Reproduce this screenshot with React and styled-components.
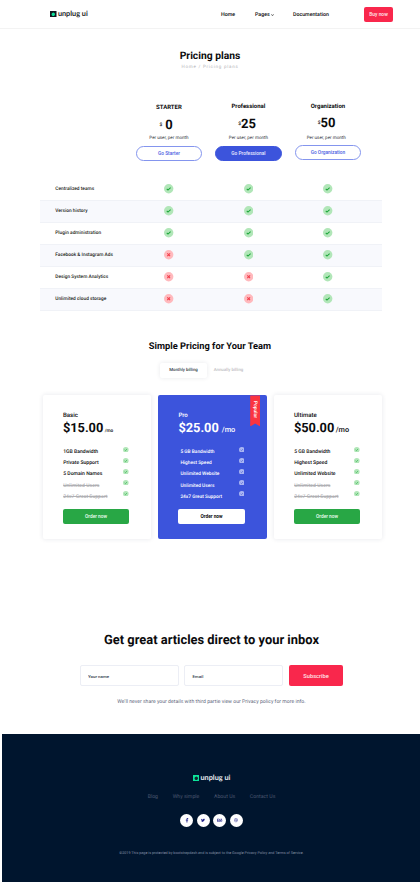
import React from 'react';
import styled, { createGlobalStyle, css } from 'styled-components';
import { FaFacebookF, FaTwitter, FaBehance, FaDribbble } from 'react-icons/fa';

const GlobalStyle = createGlobalStyle`
  *, *::before, *::after { box-sizing: border-box; }
  body { margin: 0; background: #fff; color: #0b0b0d; font-family: Roboto, sans-serif; font-weight: 500; overflow: hidden; }
  button, input { font: inherit; border: 0; padding: 0; margin: 0; }
  ul { list-style: none; margin: 0; padding: 0; }
  h1, h2, h3, p { margin: 0; }
`;

const Page = styled.div`
  width: 420px;
  height: 882px;
  display: flex;
  flex-direction: column;
  white-space: nowrap;
  text-rendering: geometricPrecision;
`;

/* Header */
const Header = styled.header`
  height: 29px;
  flex: none;
  display: flex;
  align-items: flex-start;
  padding: 7px 27px 0 50px;
  border-bottom: 1px solid #f3f3f3;
`;
const Brand = styled.div`
  display: flex;
  align-items: center;
  gap: 1.4px;
  height: 14px;
  color: ${(p) => (p.$dark ? '#e9edf2' : '#1c1d1f')};
  font: 700 7.3px/14px Lato, sans-serif;
  svg { width: 6.5px; height: 6.5px; display: block; }
`;
const Nav = styled.nav`
  display: grid;
  grid-template-columns: 34px 38px 71px;
  margin-left: auto;
  font-size: 5.25px;
  line-height: 16px;
`;
const NavLink = styled.a`
  display: flex;
  align-items: center;
  gap: 1.1px;
  svg { width: 3px; height: 3px; }
`;
const BuyButton = styled.button`
  width: 29px;
  height: 14.6px;
  border-radius: 2px;
  background: #f9274c;
  color: #ffe9ed;
  font-size: 4.9px;
  font-weight: 500;
`;

/* Page title */
const TitleBlock = styled.section`
  height: 71px;
  flex: none;
  padding-top: 20px;
  text-align: center;
`;
const PageTitle = styled.h1`
  font-size: 10.3px;
  line-height: 13px;
  font-weight: 700;
`;
const Breadcrumb = styled.p`
  color: #b4b4b8;
  font-size: 4.5px;
  line-height: 11px;
  font-weight: 400;
  letter-spacing: 0.75px;
`;

/* Comparison */
const PlanHeads = styled.div`
  display: grid;
  grid-template-columns: 66.5px 66.5px 66.5px;
  column-gap: 13px;
  margin-left: 135.7px;
  height: 78.5px;
  flex: none;
  text-align: center;
`;
const PlanHead = styled.div`
  padding-top: ${(p) => p.$top + 1}px;
  display: flex;
  flex-direction: column;
  align-items: center;
`;
const PlanName = styled.h3`
  font-size: 6px;
  line-height: 8px;
  font-weight: 700;
`;
const PlanPrice = styled.div`
  display: flex;
  align-items: center;
  gap: ${(p) => p.$gap}px;
  height: 15px;
  margin: 5.5px ${(p) => p.$gap + 2.7}px 0 0;
  font-size: 13px;
  font-weight: 700;
  span { font-size: 4.8px; font-weight: 500; }
`;
const PlanNote = styled.p`
  margin-top: ${(p) => p.$top - 0.5}px;
  padding-right: ${(p) => p.$nudge || 0}px;
  font-size: 4.55px;
  line-height: 7px;
  font-weight: 400;
  color: #33353d;
`;
const PlanButton = styled.button`
  width: 66.5px;
  height: 15px;
  margin-top: ${(p) => p.$top - 1}px;
  flex: none;
  border-radius: 8px;
  border: 1px solid ${(p) => (p.$filled ? '#3c54dc' : '#8495ee')};
  background: ${(p) => (p.$filled ? '#3c54dc' : '#fff')};
  color: ${(p) => (p.$filled ? '#e8ebff' : '#4b62e2')};
  font-size: 4.8px;
  font-weight: 500;
`;
const Features = styled.div`
  width: 342px;
  margin-left: 40px;
  flex: none;
`;
const FeatureRow = styled.div`
  display: grid;
  grid-template-columns: 74px 79.5px 79.5px 79.5px;
  align-items: center;
  justify-items: center;
  height: 22px;
  padding: 0.2px 0 0 15.3px;
  background: ${(p) => (p.$shaded ? '#f8f9fd' : '#fff')};
  border-bottom: 1px solid #f0f2f7;
`;
const FeatureName = styled.span`
  justify-self: start;
  padding-top: 1px;
  font-size: 4.8px;
  color: #1d1e22;
`;
const Mark = styled.svg`
  width: ${(p) => p.$size}px;
  height: ${(p) => p.$size}px;
  display: block;
`;

/* Pricing cards */
const SectionTitle = styled.h2`
  margin-top: 29.5px;
  height: 13px;
  flex: none;
  text-align: center;
  font-size: 9.3px;
  line-height: 14px;
  font-weight: 700;
`;
const Billing = styled.div`
  display: flex;
  flex: none;
  height: 14.5px;
  margin: 10px 0 0 160px;
  font-size: 4.35px;
  line-height: 16.6px;
`;
const BillingTab = styled.div`
  width: ${(p) => (p.$active ? 47 : 43)}px;
  text-align: center;
  border-radius: 2px;
  color: ${(p) => (p.$active ? '#2d3947' : '#bdbdc2')};
  ${(p) => p.$active && css`box-shadow: 0 0 4px rgba(30, 40, 70, 0.1);`}
`;
const Cards = styled.div`
  display: grid;
  grid-template-columns: 108.5px 108.5px 108.5px;
  column-gap: 7px;
  margin: 17.9px 0 0 42.7px;
  flex: none;
`;
const Card = styled.article`
  position: relative;
  height: 143.6px;
  padding: 15.3px 0 0 20.2px;
  border-radius: 2px;
  background: ${(p) => (p.$featured ? '#3c54dc' : '#fff')};
  color: ${(p) => (p.$featured ? '#fff' : '#0b0b0d')};
  box-shadow: ${(p) => (p.$featured ? 'none' : '0 0 5px rgba(30, 40, 70, 0.11)')};
`;
const CardName = styled.h3`
  font-size: 6.1px;
  line-height: 9px;
  font-weight: 500;
`;
const CardPrice = styled.div`
  display: flex;
  align-items: baseline;
  gap: ${(p) => p.$gap}px;
  height: 16px;
  font-size: 12.8px;
  line-height: 18.6px;
  font-weight: 700;
  small { font-size: ${(p) => p.$unit}px; font-weight: 500; }
`;
const CardBody = styled.div`
  display: flex;
  justify-content: space-between;
  width: 65.9px;
  margin-top: 10.9px;
  padding-left: ${(p) => p.$inset}px;
  height: 60px;
`;
const CardList = styled.ul`
  font-size: ${(p) => p.$size}px;
  line-height: 11.4px;
`;
const CardItem = styled.li`
  ${(p) => p.$off && css`color: #b0b0b4; text-decoration: line-through;`}
`;
const CardMarks = styled.div`
  display: flex;
  flex-direction: column;
  gap: 5.4px;
  padding-top: 0.3px;
`;
const OrderButton = styled.button`
  display: block;
  width: 66.3px;
  height: 14.7px;
  margin-top: 2.6px;
  border-radius: 2px;
  background: ${(p) => (p.$light ? '#fff' : '#28a745')};
  color: ${(p) => (p.$light ? '#0b0b0d' : '#effff2')};
  font-size: 4.8px;
  font-weight: ${(p) => (p.$light ? 700 : 500)};
`;
const Ribbon = styled.div`
  position: absolute;
  top: 0;
  right: 6.5px;
  width: 10px;
  height: 31px;
  padding-bottom: 3px;
  background: #fb3440;
  color: #fff;
  clip-path: polygon(0 0, 100% 0, 100% 100%, 50% 91%, 0 100%);
  writing-mode: vertical-rl;
  text-align: center;
  font-size: 4.9px;
  line-height: 10px;
`;

/* Newsletter */
const Newsletter = styled.section`
  flex: none;
  height: 194.6px;
  padding-top: 93.4px;
`;
const NewsTitle = styled.h2`
  padding-left: 3px;
  text-align: center;
  font-size: 12.9px;
  line-height: 18px;
  font-weight: 700;
`;
const NewsForm = styled.form`
  display: grid;
  grid-template-columns: 99px 99px 54.5px;
  gap: 5.4px;
  height: 21px;
  margin: 14.9px 0 0 80px;
`;
const Field = styled.input`
  width: 100%;
  height: 21px;
  padding: 0.5px 0 0 7px;
  border: 1px solid #eceef5;
  border-radius: 2px;
  font-size: 4.4px;
  background: #fff;
  &::placeholder { color: #2d3947; opacity: 1; }
`;
const Subscribe = styled.button`
  border-radius: 2px;
  background: #f9274c;
  color: #ffe4e9;
  font-size: 5.7px;
  font-weight: 500;
`;
const NewsNote = styled.p`
  margin-top: 11.6px;
  padding-left: 3px;
  text-align: center;
  color: #62687d;
  font-size: 5.15px;
  line-height: 8px;
  font-weight: 400;
`;

/* Footer */
const Footer = styled.footer`
  flex: 1;
  margin-left: 2px;
  padding: 37.2px 0 0 1px;
  background: #00152e;
  display: flex;
  flex-direction: column;
  align-items: center;
`;
const FooterLinks = styled.nav`
  display: flex;
  gap: 14.7px;
  margin-top: 8px;
  font-size: 5.2px;
  line-height: 9px;
  font-weight: 400;
  color: #4c576f;
`;
const Socials = styled.div`
  display: flex;
  gap: 3.5px;
  margin-top: 12px;
`;
const Social = styled.a`
  display: grid;
  place-items: center;
  width: 13px;
  height: 13px;
  border-radius: 50%;
  background: #fff;
  color: #26278b;
  svg { width: ${(p) => p.$size || 4}px; height: 4.6px; }
`;
const Copyright = styled.p`
  margin-top: 22.5px;
  font-size: 3.7px;
  line-height: 8px;
  font-weight: 400;
  color: #8490a5;
`;

function Logo({ dark }) {
  return (
    <Brand $dark={dark}>
      <svg viewBox="0 0 13 13">
        <rect width="13" height="13" fill={dark ? '#0ce39a' : '#101820'} />
        <path d="M6.5 3l3 1.3.5 3-2 2.7H5L3 7.5l.7-3.2z" fill={dark ? '#10252f' : '#0ce39a'} />
      </svg>
      <span>unplug ui</span>
    </Brand>
  );
}

function StatusMark({ on, size = 9.4, light }) {
  const fill = light ? '#aab6f3' : on ? '#b1e6b8' : '#ffb9bd';
  const stroke = light ? '#4459cf' : on ? '#20a83d' : '#f33d4b';
  return (
    <Mark $size={size} viewBox="0 0 20 20">
      <circle cx="10" cy="10" r="10" fill={fill} />
      <path
        d={on ? 'M5.8 10.4l2.7 2.5 5.6-5' : 'M7 7l6 6M13 7l-6 6'}
        fill="none"
        stroke={stroke}
        strokeWidth="2.3"
      />
    </Mark>
  );
}

const plans = [
  { name: 'STARTER', amount: '0', cta: 'Go Starter', top: 3, gap: 3, note: 3, button: 5.2 },
  { name: 'Professional', amount: '25', cta: 'Go Professional', top: 2, gap: 0, note: 4, button: 4.5, filled: true },
  { name: 'Organization', amount: '50', cta: 'Go Organization', top: 1.5, gap: 0, note: 4.5, button: 3.8, nudge: 3.4 },
];
const features = [
  ['Centralized teams', 1, 1, 1],
  ['Version history', 1, 1, 1],
  ['Plugin administration', 1, 1, 1],
  ['Facebook & Instagram Ads', 0, 1, 1],
  ['Design System Analytics', 0, 0, 1],
  ['Unlimited cloud storage', 0, 0, 1],
];
const cards = [
  { name: 'Basic', price: '$15.00', unit: 4.7, gap: 1.4, inset: 0.3, size: 5.1, off: 2, items: ['1GB Bandwidth', 'Private Support', '5 Domain Names', 'Unlimited Users', '24x7 Great Support'] },
  { name: 'Pro', price: '$25.00', unit: 7.4, gap: 3, inset: 2, size: 4.8, off: 0, featured: true, items: ['5 GB Bandwidth', 'Highest Speed', 'Unlimited Website', 'Unlimited Users', '24x7 Great Support'] },
  { name: 'Ultimate', price: '$50.00', unit: 7.3, gap: 1.4, inset: 0.3, size: 5.1, off: 2, items: ['5 GB Bandwidth', 'Highest Speed', 'Unlimited Website', 'Unlimited Users', '24x7 Great Support'] },
];

export default function App() {
  return (
    <Page>
      <GlobalStyle />
      <Header>
        <Logo />
        <Nav>
          <NavLink>Home</NavLink>
          <NavLink>
            Pages
            <svg viewBox="0 0 6 6"><path d="M.7 1.2l2.3 1.6 2.3-1.6" fill="none" stroke="#111" strokeWidth="1.5" /></svg>
          </NavLink>
          <NavLink>Documentation</NavLink>
        </Nav>
        <BuyButton>Buy now</BuyButton>
      </Header>

      <TitleBlock>
        <PageTitle>Pricing plans</PageTitle>
        <Breadcrumb>Home / Pricing plans</Breadcrumb>
      </TitleBlock>

      <PlanHeads>
        {plans.map((p) => (
          <PlanHead key={p.name} $top={p.top}>
            <PlanName>{p.name}</PlanName>
            <PlanPrice $gap={p.gap}><span>$</span>{p.amount}</PlanPrice>
            <PlanNote $top={p.note} $nudge={p.nudge}>Per user, per month</PlanNote>
            <PlanButton $filled={p.filled} $top={p.button}>{p.cta}</PlanButton>
          </PlanHead>
        ))}
      </PlanHeads>
      <Features>
        {features.map(([name, ...marks], i) => (
          <FeatureRow key={name} $shaded={i % 2 === 1}>
            <FeatureName>{name}</FeatureName>
            {marks.map((on, j) => <StatusMark key={j} on={!!on} />)}
          </FeatureRow>
        ))}
      </Features>

      <SectionTitle>Simple Pricing for Your Team</SectionTitle>
      <Billing>
        <BillingTab $active>Monthly billing</BillingTab>
        <BillingTab>Annually billing</BillingTab>
      </Billing>
      <Cards>
        {cards.map((c) => (
          <Card key={c.name} $featured={c.featured}>
            {c.featured && <Ribbon>Popular</Ribbon>}
            <CardName>{c.name}</CardName>
            <CardPrice $unit={c.unit} $gap={c.gap}>{c.price}<small>/mo</small></CardPrice>
            <CardBody $inset={c.inset}>
              <CardList $size={c.size}>
                {c.items.map((t, i) => <CardItem key={t} $off={i >= 5 - c.off}>{t}</CardItem>)}
              </CardList>
              <CardMarks>
                {c.items.map((t) => <StatusMark key={t} on size={5.6} light={c.featured} />)}
              </CardMarks>
            </CardBody>
            <OrderButton $light={c.featured}>Order now</OrderButton>
          </Card>
        ))}
      </Cards>

      <Newsletter>
        <NewsTitle>Get great articles direct to your inbox</NewsTitle>
        <NewsForm>
          <Field placeholder="Your name" />
          <Field placeholder="Email" />
          <Subscribe type="button">Subscribe</Subscribe>
        </NewsForm>
        <NewsNote>We’ll never share your details with third partie view our Privacy policy for more info.</NewsNote>
      </Newsletter>

      <Footer>
        <Logo dark />
        <FooterLinks>
          <a>Blog</a><a>Why simple</a><a>About Us</a><a>Contact Us</a>
        </FooterLinks>
        <Socials>
          <Social><FaFacebookF /></Social>
          <Social><FaTwitter /></Social>
          <Social $size={5.6}><FaBehance /></Social>
          <Social><FaDribbble /></Social>
        </Socials>
        <Copyright>©2019 This page is protected by bootstrapdash and is subject to the Google Privacy Policy and Terms of Service.</Copyright>
      </Footer>
    </Page>
  );
}
